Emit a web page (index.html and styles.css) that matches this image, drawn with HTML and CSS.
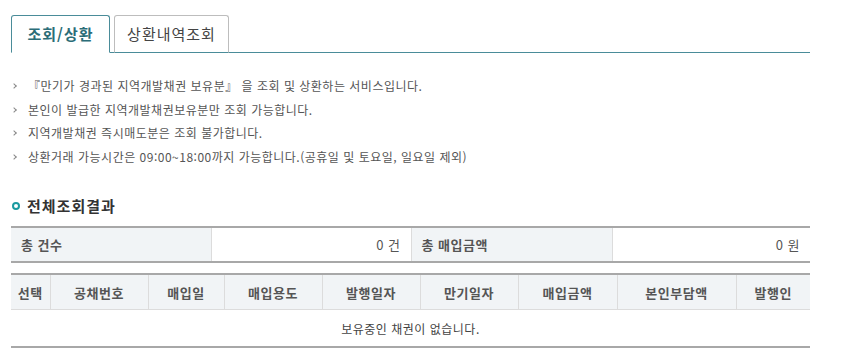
FILE: index.html
```html
<!DOCTYPE html>
<html lang="ko">
<head>
<meta charset="utf-8">
<title>조회/상환</title>
<link rel="stylesheet" href="styles.css">
</head>
<body>
<div class="page">
  <div class="tabs">
    <div class="tab active">조회/상환</div>
    <div class="tab">상환내역조회</div>
  </div>

  <ul class="notes">
    <li>『만기가 경과된 지역개발채권 보유분』 을 조회 및 상환하는 서비스입니다.</li>
    <li>본인이 발급한 지역개발채권보유분만 조회 가능합니다.</li>
    <li>지역개발채권 즉시매도분은 조회 불가합니다.</li>
    <li>상환거래 가능시간은 09:00~18:00까지 가능합니다.(공휴일 및 토요일, 일요일 제외)</li>
  </ul>

  <h2 class="section-title"><span class="dot"></span>전체조회결과</h2>

  <table class="summary">
    <colgroup>
      <col style="width:200px"><col style="width:200px"><col style="width:201px"><col style="width:198px">
    </colgroup>
    <tr>
      <th>총 건수</th>
      <td>0 건</td>
      <th>총 매입금액</th>
      <td>0 원</td>
    </tr>
  </table>

  <table class="list">
    <colgroup>
      <col style="width:39px"><col style="width:98px"><col style="width:76px"><col style="width:98px"><col style="width:98px"><col style="width:98px"><col style="width:99px"><col style="width:119px"><col style="width:74px">
    </colgroup>
    <thead>
      <tr>
        <th>선택</th><th>공채번호</th><th>매입일</th><th>매입용도</th><th>발행일자</th><th>만기일자</th><th>매입금액</th><th>본인부담액</th><th>발행인</th>
      </tr>
    </thead>
    <tbody>
      <tr><td colspan="9" class="empty">보유중인 채권이 없습니다.</td></tr>
    </tbody>
  </table>
</div>
</body>
</html>
```

FILE: styles.css
```css
html, body {
  margin: 0;
  padding: 0;
  background: #fff;
}
body {
  font-family: "Noto Sans CJK KR", "Liberation Sans", sans-serif;
  color: #555;
  font-size: 12px;
}
.page {
  width: 799px;
  padding: 15px 0 0 11px;
}
.tabs {
  display: flex;
  gap: 4px;
  height: 37px;
  border-bottom: 1px solid #4a8c99;
  align-items: flex-end;
}
.tab {
  box-sizing: border-box;
  height: 38px;
  margin-bottom: -1px;
  border: 1px solid #bdbdbd;
  border-bottom: 1px solid #4a8c99;
  border-radius: 3px 3px 0 0;
  font-size: 15px;
  line-height: 36px;
  letter-spacing: 1px;
  color: #444;
  text-align: center;
  width: 115px;
  background: #fff;
}
.tab.active {
  width: 99px;
  border-color: #4a8c99;
  border-bottom-color: #fff;
  color: #2b6d78;
  font-weight: bold;
}
.notes {
  list-style: none;
  margin: 21px 0 0;
  padding: 0;
}
.notes li {
  position: relative;
  padding-left: 17px;
  line-height: 23.5px;
  color: #555;
  font-size: 12px;
  letter-spacing: 0.5px;
}
.notes li::before {
  content: "";
  position: absolute;
  left: 1px;
  top: 10px;
  width: 3px;
  height: 3px;
  border-top: 1px solid #888;
  border-right: 1px solid #888;
  transform: rotate(45deg);
}
.section-title {
  margin: 27px 0 0;
  display: flex;
  align-items: center;
  font-size: 15px;
  font-weight: bold;
  color: #333;
  line-height: 22px;
  letter-spacing: 1px;
}
.dot {
  box-sizing: border-box;
  width: 8px;
  height: 8px;
  border: 2px solid #1a9aa0;
  border-radius: 50%;
  margin: 0 7px 0 1px;
}
table {
  border-collapse: collapse;
  table-layout: fixed;
  width: 799px;
}
.summary {
  margin-top: 9px;
  border-top: 2px solid #a8a8a8;
  border-bottom: 2px solid #a8a8a8;
}
.summary th, .summary td {
  height: 33px;
  padding: 0 10px;
  font-size: 13px;
  letter-spacing: 0.5px;
}
.summary th {
  background: #f1f4f6;
  text-align: left;
  font-weight: bold;
  color: #555;
  border-right: 1px solid #dcdcdc;
}
.summary td {
  text-align: right;
  color: #555;
  border-right: 1px solid #dcdcdc;
}
.summary td:last-child {
  border-right: none;
}
.list {
  margin-top: 10px;
  border-top: 2px solid #a8a8a8;
  border-bottom: 2px solid #a8a8a8;
}
.list th {
  background: #f1f4f6;
  height: 34px;
  padding: 0;
  font-size: 13px;
  font-weight: bold;
  color: #555;
  letter-spacing: 0.5px;
  border-right: 1px solid #dcdcdc;
  border-bottom: 1px solid #dcdcdc;
}
.list th:last-child {
  border-right: none;
}
.list td.empty {
  height: 34px;
  text-align: center;
  font-size: 12px;
  color: #444;
  letter-spacing: 0.5px;
}
```
